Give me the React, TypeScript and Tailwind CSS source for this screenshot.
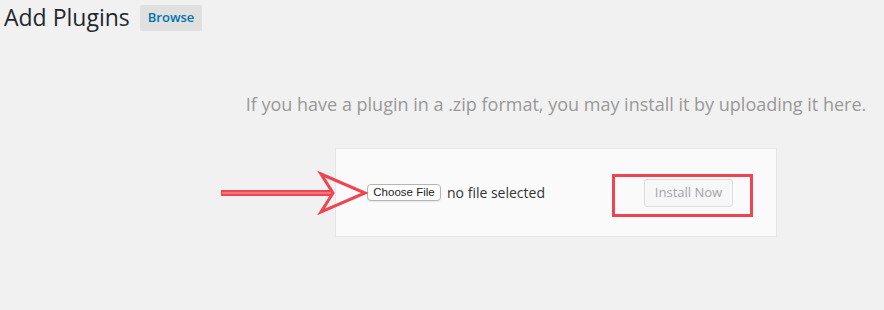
import React from "react";

const openSans = { fontFamily: '"Open Sans", "Liberation Sans", sans-serif' };

export default function App() {
  return (
    <div
      className="relative h-[310px] w-[884px] overflow-hidden bg-[#f1f1f1] text-[#23282d]"
      style={openSans}
    >
      {/* Title row */}
      <div className="flex items-center pl-[4px] pt-[3px]">
        <h1 className="text-[23px] leading-[29px] font-normal">Add Plugins</h1>
        <span className="ml-[10px] flex h-[26px] items-center rounded-[2px] bg-[#e0e0e0] px-[8px] text-[13px] font-semibold text-[#0073aa]">
          Browse
        </span>
      </div>

      {/* Upload area */}
      <div className="ml-[228px] flex flex-col items-center">
        <p className="mt-[60px] text-[18px] leading-[25px] text-[#999]">
          If you have a plugin in a .zip format, you may install it by uploading it here.
        </p>

        <div className="mt-[31px] flex h-[89px] w-[442px] items-center justify-between border border-[#e5e5e5] bg-[#fafafa] pl-[31px] pr-[43px]">
          <div className="flex items-center gap-[6px]">
            <span
              className="flex h-[17px] w-[74px] items-center justify-center rounded-[4px] border border-[#b5b5b5] bg-white text-[11.5px] text-[#222] shadow-[0_1px_1px_rgba(0,0,0,0.08)]"
              style={{ fontFamily: '"Liberation Sans", Arial, sans-serif' }}
            >
              Choose File
            </span>
            <span className="text-[14px] text-[#333]">no file selected</span>
          </div>
          <span className="flex h-[28px] w-[89px] items-center justify-center rounded-[3px] border border-[#dddddd] bg-[#f7f7f7] text-[13px] text-[#a0a5aa]">
            Install Now
          </span>
        </div>
      </div>

      {/* Annotations */}
      <div className="absolute left-[612px] top-[174px] h-[43px] w-[141px] border-[3px] border-[#ef4452]" />
      <svg
        className="pointer-events-none absolute left-0 top-0"
        width="884"
        height="310"
        viewBox="0 0 884 310"
      >
        <line x1="221" y1="193" x2="333" y2="193" stroke="#ef4452" strokeWidth="6" />
        <line x1="222" y1="193" x2="332" y2="193" stroke="#f7a5ad" strokeWidth="1.2" />
        <polygon
          points="321,174 365,193 321,212 333,193"
          fill="none"
          stroke="#ef4452"
          strokeWidth="3"
          strokeLinejoin="miter"
        />
      </svg>
    </div>
  );
}
